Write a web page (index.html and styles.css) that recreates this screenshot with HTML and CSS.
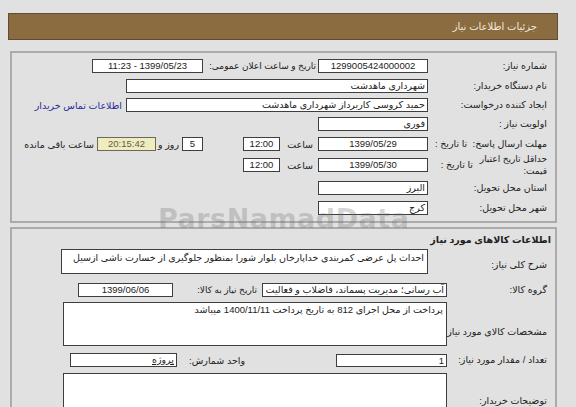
FILE: index.html
```html
<!DOCTYPE html>
<html lang="fa" dir="rtl">
<head>
<meta charset="utf-8">
<title>جزئیات اطلاعات نیاز</title>
<link rel="stylesheet" href="styles.css">
</head>
<body>
<div class="page">
  <div class="header">جزئیات اطلاعات نیاز</div>

  <div class="panel p1">
    <div class="grid1">
      <div class="row">
        <div class="lbl">شماره نیاز:</div>
        <div class="box w110 c">1299005424000002</div>
        <div class="lbl2">تاریخ و ساعت اعلان عمومی:</div>
        <div class="box w111 c">1399/05/23 - 11:23</div>
      </div>
      <div class="row">
        <div class="lbl">نام دستگاه خریدار:</div>
        <div class="box w302">شهرداری ماهدشت</div>
      </div>
      <div class="row">
        <div class="lbl">ایجاد کننده درخواست:</div>
        <div class="box w302">حمید  کروسی کاربرداز شهرداری ماهدشت</div>
        <a class="link" href="#">اطلاعات تماس خریدار</a>
      </div>
      <div class="row">
        <div class="lbl">اولویت نیاز :</div>
        <div class="box w110">فوری</div>
      </div>
      <div class="row">
        <div class="lbl">مهلت ارسال پاسخ:&nbsp; تا تاریخ :</div>
        <div class="box w110 c">1399/05/29</div>
        <div class="hour">ساعت</div>
        <div class="box w37 c">12:00</div>
        <div class="box w21 c days">5</div>
        <div class="word">روز و</div>
        <div class="box w59 c remain">20:15:42</div>
        <div class="word">ساعت باقی مانده</div>
      </div>
      <div class="row">
        <div class="lbl split">
          <span class="two">حداقل تاریخ اعتبار<br>قیمت:</span>
          <span class="until">تا تاریخ :</span>
        </div>
        <div class="box w110 c">1399/05/30</div>
        <div class="hour">ساعت</div>
        <div class="box w37 c">12:00</div>
      </div>
      <div class="row">
        <div class="lbl">استان محل تحویل:</div>
        <div class="box w110">البرز</div>
      </div>
      <div class="row">
        <div class="lbl">شهر محل تحویل:</div>
        <div class="box w110">کرج</div>
      </div>
    </div>
  </div>

  <div class="panel p2">
    <div class="title">اطلاعات کالاهای مورد نیاز</div>
    <div class="row2 desc">
      <div class="lbl l-desc">شرح کلی نیاز:</div>
      <div class="box area a1">احداث پل عرضی کمربندی خداپارخان بلوار شورا بمنظور جلوگیری از خسارت ناشی ازسیل</div>
    </div>
    <div class="row2 grp">
      <div class="lbl lb100 mid">گروه کالا:</div>
      <div class="box w185">آب رسانی؛ مدیریت پسماند، فاضلاب و فعالیت ها</div>
      <div class="word need">تاریخ نیاز به کالا:</div>
      <div class="box w95 c">1399/06/06</div>
    </div>
    <div class="row2 spec">
      <div class="lbl lb100 l-spec">مشخصات کالای مورد نیاز:</div>
      <div class="box area a2">پرداخت از محل اجرای 812 به تاریخ پرداخت 1400/11/11 میباشد</div>
    </div>
    <div class="row2 qty">
      <div class="lbl lb100 mid">تعداد / مقدار مورد نیاز:</div>
      <div class="box w111">1</div>
      <div class="word unit">واحد شمارش:</div>
      <div class="box w107"><span class="ul">پروژه</span></div>
    </div>
    <div class="row2 note">
      <div class="lbl lb100 l-note">توضیحات خریدار:</div>
      <div class="box area a3"></div>
    </div>
  </div>

  <div class="watermark">ParsNamadData</div>
</div>
</body>
</html>
```

FILE: styles.css
```css
* { box-sizing: border-box; }

html, body {
  margin: 0;
  padding: 0;
  background: #e1e1e1;
}

body {
  direction: rtl;
  font-family: "Liberation Sans", "DejaVu Sans", sans-serif;
  font-size: 9.5px;
  color: #222;
  width: 576px;
  height: 407px;
  overflow: hidden;
}

.page {
  position: relative;
  padding-top: 13px;
}

.header {
  margin: 0 18px 0 8px;
  height: 27px;
  background: #8b6c41;
  border: 1px solid #5e4c33;
  color: #f1ebdf;
  font-size: 10px;
  line-height: 25px;
  padding-right: 20px;
}

.panel {
  margin: 0 19px 0 10px;
  border: 2px solid #ababab;
  padding-right: 8px;
}

.p1 {
  margin-top: 11px;
  padding-top: 6px;
  padding-bottom: 6px;
}

.grid1 {
  display: grid;
  grid-template-rows: 20px 19px 19px 20px 21px 23px 20px 14px;
}

.row {
  display: flex;
  align-items: center;
  height: 14px;
}

.lbl {
  width: 119px;
  flex: none;
  line-height: 14px;
  white-space: nowrap;
}

.lb100 { width: 100px; }

.lbl2 {
  width: 113px;
  margin-right: 2px;
  flex: none;
  white-space: nowrap;
  font-size: 9px;
}

.split {
  display: flex;
  align-items: center;
}

.two {
  line-height: 12px;
  width: 74px;
  flex: none;
  white-space: nowrap;
  font-size: 9px;
}

.until {
  flex: none;
}

.box {
  flex: none;
  height: 14px;
  background: #fff;
  border: 1px solid #3e3e3e;
  line-height: 12px;
  padding: 0 2px;
  white-space: nowrap;
  overflow: hidden;
  text-align: right;
}

.c { text-align: center; }

.w110 { width: 110px; }
.w111 { width: 111px; }
.w302 { width: 302px; }
.w37 { width: 37px; }
.w21 { width: 21px; }
.w59 { width: 59px; }
.w185 { width: 185px; }
.w95 { width: 95px; }
.w107 { width: 107px; }

.hour {
  width: 38px;
  flex: none;
  padding-right: 5px;
}

.days { margin-right: 40px; }

.word {
  flex: none;
  margin-right: 3px;
  white-space: nowrap;
}

.remain {
  margin-right: 2px;
  background: #efecbf;
  color: #5d5d4a;
  border-color: #6a6a5a;
}

.link {
  margin-right: 4px;
  color: #2a2a9c;
  text-decoration: none;
  white-space: nowrap;
}

/* panel 2 */
.p2 {
  margin-top: 4px;
  padding-top: 4px;
  height: 200px;
}

.title {
  font-weight: bold;
  line-height: 14px;
  margin-right: -4px;
}

.row2 {
  display: flex;
  align-items: flex-start;
}

.desc { margin-top: 2px; }
.l-desc { margin-top: 9px; }

.area {
  line-height: 14px;
  white-space: normal;
  padding: 1px 3px 0 2px;
}

.a1 { width: 367px; height: 25px; }

.grp { margin-top: 9px; align-items: center; }
.mid { line-height: 14px; }

.need { margin-right: 5px; width: 84px; font-size: 9px; }

.spec { margin-top: 5px; }
.l-spec { margin-top: 23px; }
.a2 { width: 384px; height: 44px; padding-top: 0; }

.qty { margin-top: 7px; align-items: center; }
.qty .w111 { height: 13px; }
.unit { margin-right: 91px; width: 68px; }

.ul {
  text-decoration: underline;
}

.note { margin-top: 6px; }
.l-note { margin-top: 21px; }
.a3 { width: 384px; height: 60px; }

.watermark {
  position: absolute;
  left: 158px;
  top: 203px;
  direction: ltr;
  font-family: "DejaVu Sans", sans-serif;
  font-weight: bold;
  font-size: 27px;
  color: rgba(110, 110, 110, 0.28);
  letter-spacing: 0.5px;
  pointer-events: none;
}
```
